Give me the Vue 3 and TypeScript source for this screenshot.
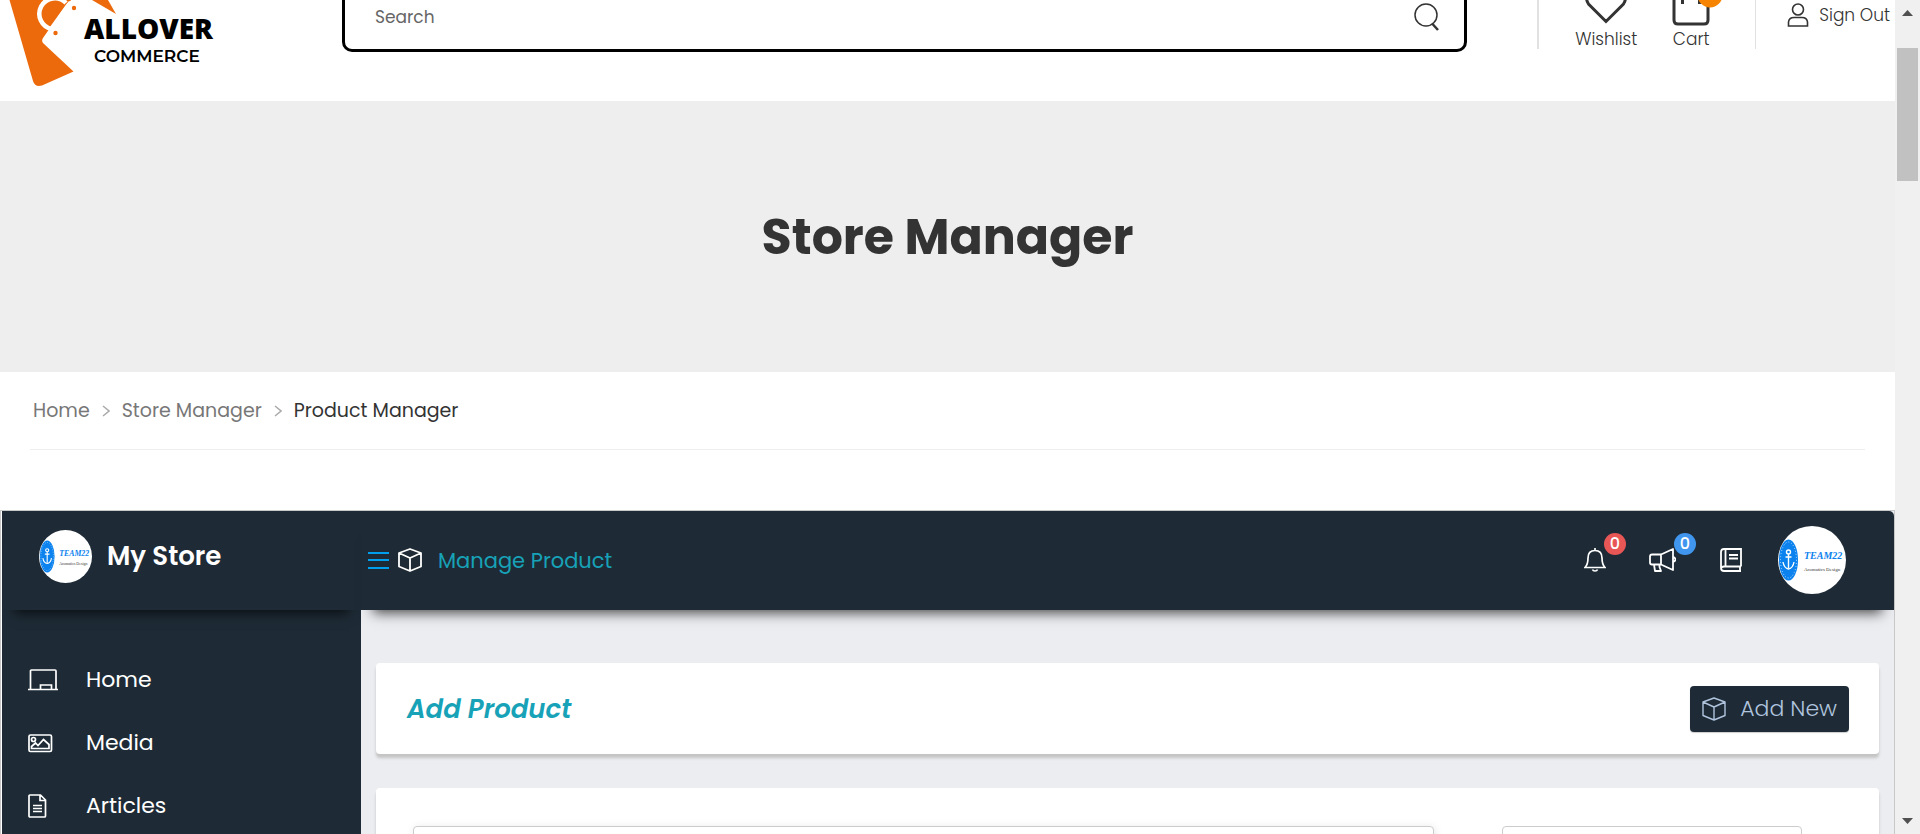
<script setup lang="ts">
interface MenuItem {
  label: string
  icon: 'home' | 'media' | 'article'
}

const crumbs: string[] = ['Home', 'Store Manager']
const menu: MenuItem[] = [
  { label: 'Home', icon: 'home' },
  { label: 'Media', icon: 'media' },
  { label: 'Articles', icon: 'article' },
]
</script>

<template>
  <div class="window">
    <div class="page">
      <header class="top">
        <a class="logo" href="#" aria-label="Allover Commerce">
          <svg width="220" height="101" viewBox="0 0 220 101">
            <path fill="#ec6a0c" d="M9.500 0L33 81Q35 87.500 42 85.500L73.500 71.500L43.500 43.500Q41 41 43 38L66 5L70 0Z" />
            <path fill="none" stroke="#fff" stroke-width="4.500" d="M52 29A15.500 15.500 0 1 1 66 3" />
            <path fill="#fff" d="M66.500 4L48.500 29L51 33L80 12V0H70Z" />
            <path fill="#ec6a0c" d="M92 0H108L116 14Z" />
            <g fill="#ec6a0c">
              <circle cx="55.500" cy="33" r="2.200" />
              <circle cx="74" cy="8" r="2.200" />
              <circle cx="69" cy="-1" r="2.200" />
            </g>
            <text class="logo-a" x="84" y="39">ALLOVER</text>
            <text class="logo-b" x="94" y="62">COMMERCE</text>
          </svg>
        </a>
        <form class="search" @submit.prevent>
          <input type="text" placeholder="Search" aria-label="Search" />
          <button type="submit" aria-label="Search">
            <svg width="26" height="28" viewBox="0 0 26 28" fill="none" stroke="#333">
              <circle cx="12" cy="12" r="11" stroke-width="1.500" />
              <path d="M18.500 21L24 27" stroke-width="2.500" />
            </svg>
          </button>
        </form>
        <nav class="actions" aria-label="Account">
          <a class="action" href="#">
            <svg width="44" height="42" viewBox="0 0 44 42" fill="none" stroke="#333" stroke-width="3">
              <path d="M22 34.500L4.500 17C-3 6 14-4 22 6C30-4 47 6 39.500 17Z" />
            </svg>
            <span>Wishlist</span>
          </a>
          <a class="action cart" href="#">
            <svg width="50" height="42" viewBox="0 0 50 42" fill="none" stroke="#333" stroke-width="3">
              <path d="M8 6V33Q8 37 12 37H38Q42 37 42 33V6ZM16.500 17V0M33.500 17V0" />
              <circle cx="44" cy="8" r="12.500" fill="#f78400" stroke="none" />
            </svg>
            <span>Cart</span>
          </a>
          <a class="signout" href="#">
            <svg width="22" height="24" viewBox="0 0 22 24" fill="none" stroke="#333" stroke-width="1.600">
              <circle cx="11" cy="6.500" r="5.500" />
              <path d="M1.500 23V19Q2 14.500 7 14.500H15Q20 14.500 20.500 19V23Z" />
            </svg>
            <span>Sign Out</span>
          </a>
        </nav>
      </header>

      <section class="hero">
        <h1>Store Manager</h1>
      </section>

      <nav class="crumbs" aria-label="Breadcrumb">
        <template v-for="crumb in crumbs" :key="crumb">
          <a href="#">{{ crumb }}</a>
          <svg width="8" height="12" viewBox="0 0 8 12" fill="none" stroke="#aaa" stroke-width="1.500">
            <path d="M1 1L7 6L1 11" />
          </svg>
        </template>
        <span>Product Manager</span>
      </nav>

      <section class="dash">
        <aside class="side">
          <div class="brand">
            <svg class="brand-pic" width="53" height="53" viewBox="0 0 68 68" role="img" aria-label="Team22">
              <use href="#team" />
            </svg>
            <span>My Store</span>
          </div>
          <nav class="menu" aria-label="Store">
            <a v-for="item in menu" :key="item.label" href="#">
              <svg width="30" height="24" viewBox="0 0 30 24" fill="none" stroke="#fff" stroke-width="1.700">
                <path v-if="item.icon === 'home'" d="M2.500 21V3Q2.500 2 3.500 2H27Q28 2 28 3V21M0 21.500H30M12.500 21V17H23.500V21" />
                <template v-else-if="item.icon === 'media'">
                  <rect x="1" y="4" width="22.500" height="16.500" rx="1.500" />
                  <circle cx="5.500" cy="8.500" r="2" />
                  <path d="M3.500 17.500V15.500L7.500 12L10 14.500L15.500 8.500L21 13.500V17.500Z" />
                </template>
                <path v-else d="M1 2Q1 1 2 1H12.500L17.500 6V22Q17.500 23 16.500 23H2Q1 23 1 22ZM12 1V6.500H17.500M5 11.500H14M5 14.500H14M5 17.500H14" />
              </svg>
              <span>{{ item.label }}</span>
            </a>
          </nav>
        </aside>

        <div class="work">
          <div class="bar">
            <button class="burger" type="button" aria-label="Toggle menu">
              <svg width="21" height="18" viewBox="0 0 21 18" stroke="#00a0ee" stroke-width="2">
                <path d="M0 2H21M0 9H21M0 17H21" />
              </svg>
            </button>
            <svg class="cube" width="24" height="24" viewBox="0 0 24 24" fill="none" stroke="#fff" stroke-width="1.800" stroke-linejoin="round">
              <path d="M12 1L23 5V18.500L12 23L1 18.500V5ZM1 5L12 10L23 5M12 10V23" />
            </svg>
            <h2>Manage Product</h2>
            <div class="tools">
              <button type="button" aria-label="Notifications, 0 new">
                <svg width="22" height="24" viewBox="0 0 22 24" fill="none" stroke="#fff" stroke-width="1.700">
                  <path d="M11 0V2M1 19.500Q4 16.500 4 10Q4 2.500 11 2.500T18 10Q18 16.500 21 19.500Z" />
                  <path d="M8.500 21.500Q9 23 11 23T13.500 21.500" />
                </svg>
                <span class="badge red">0</span>
              </button>
              <button class="horn" type="button" aria-label="Announcements, 0 new">
                <svg width="27" height="24" viewBox="0 0 27 24" fill="none" stroke="#fff" stroke-width="1.800" stroke-linejoin="round">
                  <path d="M12 6.500H3Q1 6.500 1 8.500V14.500Q1 16.500 3 16.500H12ZM12 6.500L24 1V22L12 16.500M24 8.500Q26.500 10 26.500 11.500T24 14M5 16.500L6 23H12L10.500 19V16.500" />
                </svg>
                <span class="badge blue">0</span>
              </button>
              <button class="book" type="button" aria-label="Knowledgebase">
                <svg width="22" height="24" viewBox="0 0 22 24" fill="none" stroke="#fff" stroke-width="1.800">
                  <path d="M21 18.500V1H4Q1 1 1 4V20Q1 23 4 23H21M21 18.500H4Q1 18.500 1 21M20 18.500V23M5.500 1V18.500M9 7H18M9 10.500H18" />
                </svg>
              </button>
              <svg class="avatar" width="68" height="68" viewBox="0 0 68 68" role="img" aria-label="Team22">
                <defs>
                  <clipPath id="round"><circle cx="34" cy="34" r="34" /></clipPath>
                </defs>
                <g id="team" clip-path="url(#round)">
                  <rect width="68" height="68" fill="#fff" />
                  <ellipse cx="10.500" cy="34" rx="9.500" ry="20.500" fill="#0b82ee" />
                  <ellipse cx="10.500" cy="34" rx="8" ry="18" fill="none" stroke="#fff" stroke-width=".7" stroke-dasharray="1 2" />
                  <g fill="none" stroke="#fff" stroke-width="1.400">
                    <circle cx="10.500" cy="26" r="2" />
                    <path d="M10.500 28V42M7.500 31H13.500M5 36Q6 42 10.500 43Q15 42 16 36" />
                  </g>
                  <text class="team-a" x="26" y="33">TEAM22</text>
                  <text class="team-b" x="26" y="45">Aromatics Design</text>
                </g>
              </svg>
            </div>
          </div>

          <main>
            <section class="card head">
              <h3>Add Product</h3>
              <button class="add" type="button">
                <svg width="24" height="24" viewBox="0 0 24 24" fill="none" stroke="#b0c4de" stroke-width="1.400" stroke-linejoin="round">
                  <path d="M12 1L23 5V18.500L12 23L1 18.500V5ZM1 5L12 10L23 5M12 10V23" />
                </svg>
                <span>Add New</span>
              </button>
            </section>
            <section class="card fields">
              <input class="wide" type="text" aria-label="Product title" />
              <input class="narrow" type="text" aria-label="Product category" />
            </section>
          </main>
        </div>
      </section>
    </div>

    <div class="scrollbar" aria-hidden="true">
      <svg width="11" height="6" viewBox="0 0 11 6"><path fill="#505050" d="M0 6L5.500 0L11 6Z" /></svg>
      <div class="thumb"></div>
      <svg class="down" width="11" height="6" viewBox="0 0 11 6"><path fill="#505050" d="M0 0L5.500 6L11 0Z" /></svg>
    </div>
  </div>
</template>

<style>
body {
  margin: 0;
}
</style>

<style scoped>
.window {
  display: grid;
  grid-template-columns: minmax(0, 1fr) 25px;
  height: 100vh;
  overflow: hidden;
  background: #fff;
  color: #333;
  font-family: Poppins, Inter, "Open Sans", sans-serif;
}
.window * {
  box-sizing: border-box;
}
a {
  color: inherit;
  text-decoration: none;
}
button {
  padding: 0;
  border: 0;
  background: none;
  color: inherit;
  font: inherit;
}
svg {
  display: block;
  flex: none;
}
h1, h2, h3 {
  margin: 0;
}
.page {
  display: flex;
  flex-direction: column;
  height: 100vh;
  overflow: hidden;
}

/* Store header */
.top {
  display: flex;
  align-items: flex-end;
  flex: none;
  height: 101px;
  overflow: hidden;
}
.logo {
  flex: none;
  width: 342px;
}
.logo-a {
  font: 800 28px "Open Sans", sans-serif;
}
.logo-b {
  font: 600 17px Montserrat, Inter, sans-serif;
}
.search {
  display: flex;
  align-items: center;
  flex: 1;
  height: 70px;
  margin-bottom: 49px;
  padding: 0 24px 0 30px;
  border: 3px solid #000;
  border-radius: 10px;
}
.search input {
  flex: 1;
  min-width: 0;
  padding: 0;
  border: 0;
  outline: 0;
  background: none;
  color: #666;
  font: 400 17px/24px Poppins, Inter, sans-serif;
}
.search input::placeholder {
  color: #666;
  opacity: 1;
}
.actions {
  display: flex;
  align-items: flex-end;
  flex: none;
  height: 68px;
  margin: 0 5px 52px 70px;
  border-left: 2px solid #e1e1e1;
  font-size: 17px;
  line-height: 20px;
  font-weight: 300;
}
.action {
  display: flex;
  flex-direction: column;
  align-items: center;
  width: 64px;
  margin-left: 35px;
}
.cart {
  width: 50px;
  margin: 0 39px 0 28px;
}
.cart svg {
  overflow: visible;
}
.signout {
  display: flex;
  align-items: center;
  gap: 10px;
  height: 68px;
  padding-left: 31px;
  border-left: 1px solid #e1e1e1;
  white-space: nowrap;
}

.hero {
  display: flex;
  align-items: center;
  justify-content: center;
  flex: none;
  height: 271px;
  background: #eee;
}
.hero h1 {
  font-size: 49px;
  line-height: 60px;
  font-weight: 700;
}
.crumbs {
  display: flex;
  align-items: center;
  flex: none;
  gap: 12px;
  height: 78px;
  margin: 0 30px 60px;
  padding-left: 3px;
  border-bottom: 1px solid #eee;
  font-size: 19px;
}
.crumbs a {
  color: #777;
}

/* Dashboard */
.dash {
  display: flex;
  flex: 1;
  min-height: 0;
  padding-left: 1px;
  border: 1px solid #c8c8c8;
  border-bottom: 0;
}
.side {
  flex: none;
  width: 359px;
  background: #1e2b36;
  color: #fff;
}
.brand {
  display: flex;
  gap: 15px;
  height: 99px;
  padding: 19px 0 0 37px;
  background: #1e2b36;
  box-shadow: 0 15px 12px -12px rgba(0, 0, 0, 0.7);
  font-size: 26px;
  line-height: 52px;
  font-weight: 600;
}
.menu {
  display: flex;
  flex-direction: column;
  padding: 38px 0 0 26px;
}
.menu a {
  display: flex;
  align-items: center;
  gap: 28px;
  height: 63px;
  font-size: 22px;
}
.work {
  display: flex;
  flex-direction: column;
  flex: 1;
  min-width: 0;
  background: #ecedf1;
}
.bar {
  display: flex;
  align-items: center;
  flex: none;
  height: 99px;
  padding: 0 48px 2px 0;
  border-radius: 0 5px 0 0;
  background: #1e2b36;
  box-shadow: 0 15px 12px -12px rgba(0, 0, 0, 0.7);
}
.burger {
  margin: 0 9px 0 7px;
}
.bar h2 {
  padding-top: 2px;
  margin-left: 16px;
  color: #17a2b8;
  font-size: 21px;
  line-height: 30px;
  font-weight: 400;
}
.tools {
  display: flex;
  align-items: center;
  margin-left: auto;
}
.tools button {
  position: relative;
}
.horn {
  margin-left: 43px;
}
.book {
  margin-left: 44px;
}
.badge {
  position: absolute;
  top: -15px;
  right: -20px;
  width: 22px;
  height: 22px;
  border-radius: 50%;
  color: #fff;
  font-size: 16px;
  line-height: 21px;
  font-weight: 500;
  text-align: center;
}
.red {
  background: #e85656;
}
.blue {
  background: #4096ee;
}
.avatar {
  margin-left: 36px;
}
.team-a {
  fill: #0b82ee;
  font: italic 700 10px "Liberation Serif", serif;
}
.team-b {
  fill: #333;
  font: 5px "Liberation Serif", serif;
}

main {
  display: flex;
  flex-direction: column;
  gap: 34px;
  padding: 53px 15px 0;
}
.card {
  border-radius: 4px;
  background: #fff;
  box-shadow: 0 4px 3px #c4c4c4;
}
.head {
  display: flex;
  align-items: center;
  justify-content: space-between;
  height: 91px;
  padding: 0 30px 0 31px;
}
.head h3 {
  color: #17a2b8;
  font-size: 26px;
  line-height: 36px;
  font-weight: 600;
  font-style: italic;
}
.add {
  display: flex;
  align-items: center;
  gap: 14px;
  height: 46px;
  padding: 0 12px;
  border-radius: 4px;
  background: #1e2b36;
  box-shadow: 0 1px 1px #ccc;
  color: #b0c4de;
  font-size: 22px;
  font-weight: 300;
}
.fields {
  display: flex;
  gap: 68px;
  padding: 38px 77px 38px 37px;
}
.fields input {
  flex: 1;
  min-width: 0;
  height: 50px;
  border: 1px solid #ccc;
  border-radius: 4px;
  background: #fff;
}
.fields .wide {
  box-shadow: 1px 1px 8px #e6e6e6;
}
.fields .narrow {
  flex: 0 0 300px;
}

.scrollbar {
  display: flex;
  flex-direction: column;
  align-items: center;
  padding: 10px 0;
  background: #f0f0f0;
}
.thumb {
  width: 21px;
  height: 133px;
  margin-top: 32px;
  background: #c1c1c1;
}
.down {
  margin-top: auto;
}
</style>
